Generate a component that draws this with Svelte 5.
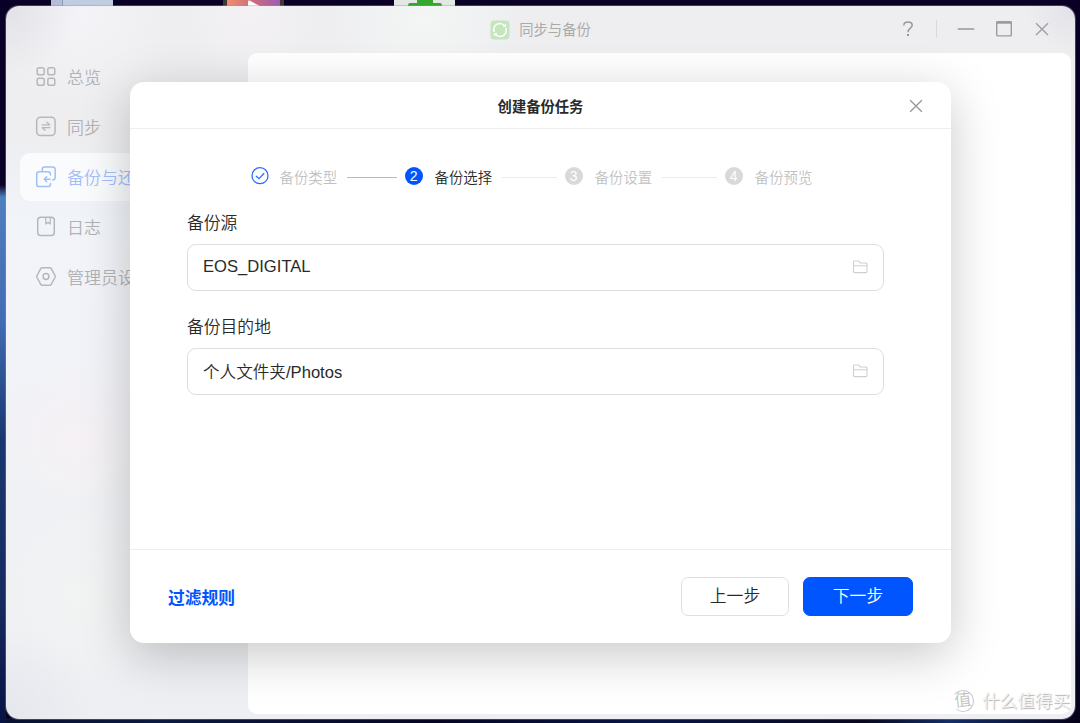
<script>
    let menu = [
        { id: "overview", label: "总览" },
        { id: "sync", label: "同步" },
        { id: "backup", label: "备份与还原" },
        { id: "log", label: "日志" },
        { id: "admin", label: "管理员设置" }
    ];

    let steps = ["备份类型", "备份选择", "备份设置", "备份预览"];

    let active = $state("backup");
    let current = $state(1);
    let open = $state(true);

    let fields = $state([
        { label: "备份源", value: "EOS_DIGITAL" },
        { label: "备份目的地", value: "个人文件夹/Photos" }
    ]);

    function next() {
        if (current < steps.length - 1) current++;
    }

    function prev() {
        if (current > 0) current--;
    }
</script>

<main class="desktop">
    <div class="shortcuts">
        <span class="shortcut doc"></span>
        <span class="shortcut video">
            <svg width="14" height="6" viewBox="0 0 14 6"><path d="M1 6V2Q1 0 3 .8L13 6Z" fill="#fff" /></svg>
        </span>
        <span class="shortcut download">
            <svg width="34" height="6" viewBox="0 0 34 6"><path d="M9 0H25V3H32Q34 3 34 6H0Q0 3 2 3H9Z" fill="#35a72c" /></svg>
        </span>
    </div>

    <div class="window">
        <header class="titlebar">
            <div class="title">
                <svg width="20" height="20" viewBox="0 0 20 20">
                    <rect x=".5" y=".5" width="19" height="19" rx="4" fill="#c4e5be" />
                    <path d="M4.3 12A6 6 0 0 1 14.6 6M15.7 8A6 6 0 0 1 5.4 14" fill="none" stroke="#fff" stroke-width="1.6" />
                    <path d="M12.5 6.8h3.6V3.4ZM7.5 13.2H3.9v3.4Z" fill="#fff" />
                </svg>
                <span>同步与备份</span>
            </div>
            <div class="controls">
                <svg class="help" width="12" height="18" viewBox="0 0 12 18" fill="none" stroke="#99999b" stroke-width="1.5">
                    <path d="M1.8 5.4Q1.8 2 6 2T10.2 5.3C10.2 8.2 6 8.2 6 12.2" />
                    <path d="M6 14v2" stroke-width="2" />
                </svg>
                <span class="divider"></span>
                <svg width="18" height="18" viewBox="0 0 18 18"><path d="M1.5 9h15" stroke="#adadaf" stroke-width="2" stroke-linecap="round" /></svg>
                <svg width="18" height="18" viewBox="0 0 18 18" fill="none" stroke="#9c9c9e">
                    <rect x="1.7" y="1.7" width="14.6" height="14.2" rx="1" stroke-width="1.4" />
                    <path d="M1.5 2.5h15" stroke-width="2.6" />
                </svg>
                <svg width="18" height="18" viewBox="0 0 18 18"><path d="M3 3.2 15 15M15 3.2 3 15" stroke="#a0a0a2" stroke-width="1.4" /></svg>
            </div>
        </header>

        <div class="body">
            <nav>
                {#each menu as item}
                    <button class="item" class:active={active === item.id} onclick={() => (active = item.id)}>
                        <svg width="22" height="22" viewBox="0 0 22 22" fill="none" stroke="currentColor" stroke-width="1.5" stroke-linecap="round" stroke-linejoin="round">
                            {#if item.id === "overview"}
                                <rect x="2.2" y="1.7" width="7" height="7" rx="1.8" />
                                <rect x="12.8" y="1.7" width="7" height="7" rx="1.8" />
                                <rect x="2.2" y="12.3" width="7" height="7" rx="1.8" />
                                <rect x="12.8" y="12.3" width="7" height="7" rx="1.8" />
                            {:else if item.id === "sync"}
                                <rect x="1.7" y="1.2" width="18.4" height="18.4" rx="3.8" />
                                <path d="M7.3 8.9h7.4L12 6.3M14.7 11.7H7.3L10 14.3" stroke-width="1.3" />
                            {:else if item.id === "backup"}
                                <path d="M7.2 5.2V3.8Q7.2 1.1 9.9 1.1H17.5Q20.2 1.1 20.2 3.8V11.2Q20.2 13.9 17.5 13.9" />
                                <path d="M15.4 9V8.2Q15.4 5.8 13 5.8H4.1Q1.7 5.8 1.7 8.2V18.2Q1.7 20.6 4.1 20.6H13Q15.4 20.6 15.4 18.2V17.6" />
                                <path d="M15 13.3H9.3M11.7 10.8 9.2 13.3 11.7 15.8" />
                            {:else if item.id === "log"}
                                <rect x="2.7" y="1.3" width="16.6" height="18.2" rx="3" />
                                <path d="M10.7 1.5V8L13 6.2 15.3 8V1.5" stroke-width="1.2" />
                            {:else}
                                <path d="M7.2 1.7H14.8Q15.7 1.7 16.1 2.4L20 9.5Q20.5 10.5 20 11.5L16.1 18.6Q15.7 19.3 14.8 19.3H7.2Q6.3 19.3 5.9 18.6L2 11.5Q1.5 10.5 2 9.5L5.9 2.4Q6.3 1.7 7.2 1.7Z" />
                                <circle cx="11" cy="10.5" r="2.9" />
                            {/if}
                        </svg>
                        <span>{item.label}</span>
                    </button>
                {/each}
            </nav>
            <section class="content"></section>
        </div>
    </div>

    {#if open}
        <div class="modal" role="dialog">
            <div class="modal-head">
                <h2>创建备份任务</h2>
                <button class="close" aria-label="关闭" onclick={() => (open = false)}>
                    <svg width="14" height="14" viewBox="0 0 14 14"><path d="M1.2 1.2 12.8 12.8M12.8 1.2 1.2 12.8" stroke="#999" stroke-width="1.4" /></svg>
                </button>
            </div>

            <div class="modal-body">
                <div class="steps">
                    {#each steps as step, i}
                        {#if i > 0}
                            <span class="line" class:passed={i <= current}></span>
                        {/if}
                        <div class="step" class:current={i === current} class:done={i < current}>
                            {#if i < current}
                                <svg width="18" height="18" viewBox="0 0 18 18" fill="none" stroke="#2c6cff" stroke-width="1.3">
                                    <circle cx="9" cy="8.7" r="8" />
                                    <path d="M5 8.9 8 11.7 13.2 6.3" />
                                </svg>
                            {:else}
                                <span class="number">{i + 1}</span>
                            {/if}
                            <span class="name">{step}</span>
                        </div>
                    {/each}
                </div>

                {#each fields as field}
                    <div class="field">
                        <div class="label">{field.label}</div>
                        <div class="input">
                            <span>{field.value}</span>
                            <svg width="16" height="14" viewBox="0 0 16 14" fill="none" stroke="#cfcfcf" stroke-width="1.1">
                                <path d="M1.5 11.6V2Q1.5 1 2.5 1H6.2Q6.8 1 7.2 1.6L8.2 3H14Q15 3 15 4V11.6Q15 12.6 14 12.6H2.5Q1.5 12.6 1.5 11.6ZM1.5 5.7H15" />
                            </svg>
                        </div>
                    </div>
                {/each}
            </div>

            <footer>
                <button class="filter">过滤规则</button>
                <button class="btn" onclick={prev}>上一步</button>
                <button class="btn primary" onclick={next}>下一步</button>
            </footer>
        </div>
    {/if}

    <div class="watermark">
        <span class="logo">值</span>
        <span>什么值得买</span>
    </div>
</main>

<style>
    :global(body) {
        margin: 0;
        overflow: hidden;
    }

    .desktop {
        position: relative;
        box-sizing: border-box;
        width: 1080px;
        height: 723px;
        padding: 6px 5px 4px 6px;
        overflow: hidden;
        background:
            linear-gradient(to bottom, #0a0025 0, #0a0025 185px, #4e7fbc 197px, #426cb4 320px, #18376f 440px, #172b60 600px, #061242 723px) 0 0 / 6px 723px no-repeat,
            linear-gradient(to right, #07102f, #0c1940 15%, #050522 40%, #081544 60%, #08071e 80%, #142e66 88%, #050019) 0 100% / 1080px 5px no-repeat,
            linear-gradient(#0a0025 0, #080026 160px, #020b38 270px, #0a245d 510px, #050723 650px, #050019);
        font-family: "Liberation Sans", "Noto Sans CJK SC", sans-serif;
        font-weight: 350;
        color: #2a2a2a;
    }

    button {
        padding: 0;
        border: none;
        background: none;
        font: inherit;
        color: inherit;
    }

    svg {
        flex: none;
        display: block;
    }

    .shortcuts {
        position: absolute;
        top: 0;
        left: 0;
        width: 100%;
        height: 6px;
    }

    .shortcut {
        position: absolute;
        top: 0;
        height: 6px;
        box-sizing: border-box;
        display: flex;
        justify-content: center;
    }

    .doc {
        left: 51px;
        width: 62px;
        background: linear-gradient(to right, #b3bdd3 11px, #8e9cb8 11px, #8e9cb8 12px, #c1cce0 12px);
    }

    .video {
        left: 223px;
        width: 61px;
        border: solid #3c3838;
        border-width: 0 4px;
        background: linear-gradient(to right, #ef8f6d, #c56a80 55%, #9e5db1);
    }

    .download {
        left: 394px;
        width: 61px;
        background: #e3e7e5;
    }

    .window {
        position: relative;
        height: 713px;
        box-sizing: border-box;
        display: flex;
        flex-direction: column;
        border-radius: 13px;
        overflow: hidden;
        box-shadow: 0 0 0 1px rgba(150, 145, 170, 0.4);
        background:
            radial-gradient(circle at 0 0, #e2e1e7 0, rgba(226, 225, 231, 0) 70px),
            radial-gradient(circle at 100% 0, #e2e1e8 0, rgba(226, 225, 232, 0) 50px),
            radial-gradient(circle at 0 100%, #e6e7ee 0, rgba(230, 231, 238, 0) 90px),
            radial-gradient(circle at 75px 10px, #f4f4f8 0, rgba(244, 244, 248, 0) 90px),
            radial-gradient(circle at 245px 8px, #f4f1f5 0, rgba(244, 241, 245, 0) 65px),
            radial-gradient(circle at 418px 12px, #f3f6f5 0, rgba(243, 246, 245, 0) 95px),
            radial-gradient(circle at 70px 435px, #f6f1f4 0, rgba(246, 241, 244, 0) 80px),
            radial-gradient(circle at 75px 590px, #f2f4f3 0, rgba(242, 244, 243, 0) 90px),
            linear-gradient(#eeeef0 0, #eeeef1 130px, #f1f4f9 220px, #f1f3f8 340px, #eff1f4 520px, #eeeff2 713px);
    }

    .titlebar {
        height: 47px;
        flex: none;
        display: grid;
        grid-template-columns: 1fr auto 1fr;
        align-items: center;
    }

    .title {
        grid-column: 2;
        display: flex;
        align-items: center;
        gap: 9px;
        font-size: 14.3px;
        font-weight: 400;
        color: #aaaaab;
    }

    .title span {
        padding-bottom: 2px;
    }

    .controls {
        display: flex;
        align-items: center;
        justify-content: flex-end;
        gap: 20px;
        padding: 0 24px 1px 0;
    }

    .help {
        margin-right: 2px;
    }

    .divider {
        width: 1px;
        height: 18px;
        background: #d9d9db;
    }

    .body {
        flex: 1;
        display: flex;
        padding: 0 4px 5px 0;
    }

    nav {
        width: 242px;
        box-sizing: border-box;
        padding: 0 14px;
        display: flex;
        flex-direction: column;
        gap: 2px;
    }

    .item {
        display: flex;
        align-items: center;
        gap: 10px;
        height: 48px;
        padding: 0 15px;
        border-radius: 10px;
        font-size: 17px;
        color: #b2b2b4;
    }

    .item svg {
        color: #b7b7ba;
    }

    .item span {
        padding-bottom: 2px;
    }

    .item.active,
    .item.active svg {
        color: #a3bffb;
    }

    .item.active {
        background: #fafbfd;
    }

    .content {
        flex: 1;
        border-radius: 9px;
        background: #fff;
    }

    .modal {
        position: absolute;
        left: 130px;
        top: 82px;
        width: 821px;
        height: 561px;
        display: flex;
        flex-direction: column;
        border-radius: 14px;
        background: #fff;
        box-shadow: 0 12px 50px rgba(0, 0, 0, 0.22);
    }

    .modal-head {
        height: 46px;
        flex: none;
        display: grid;
        grid-template-columns: 1fr auto 1fr;
        align-items: center;
        border-bottom: 1px solid #eee;
    }

    h2 {
        grid-column: 2;
        margin: 0;
        font-size: 14.3px;
        font-weight: 700;
    }

    .close {
        justify-self: end;
        margin-right: 28px;
        padding-top: 1px;
    }

    .modal-body {
        flex: 1;
        padding: 36px 67px 0 57px;
    }

    .steps {
        display: flex;
        align-items: center;
        height: 22px;
        margin-left: 64px;
    }

    .step {
        display: flex;
        align-items: center;
        gap: 12px;
        font-size: 14.4px;
        color: #c2c2c2;
    }

    .step.done {
        gap: 10.5px;
    }

    .number {
        width: 18px;
        height: 18px;
        border-radius: 50%;
        background: #d9d9d9;
        color: #fff;
        font-size: 14px;
        font-weight: 400;
        line-height: 18px;
        text-align: center;
    }

    .step.current {
        color: #2a2a2a;
    }

    .step.current .number {
        background: #0055ff;
    }

    .line {
        width: 55px;
        height: 1px;
        margin: 3px 8px 0 9.5px;
        background: #ebebeb;
    }

    .line.passed {
        width: 50px;
        background: #9bbcff;
    }

    .field {
        margin-top: 24px;
    }

    .label {
        height: 26px;
        line-height: 26px;
        font-size: 16.8px;
        margin-bottom: 7px;
    }

    .input {
        display: flex;
        align-items: center;
        justify-content: space-between;
        box-sizing: border-box;
        height: 47px;
        padding: 0 15px;
        border: 1px solid #dedede;
        border-radius: 9px;
        font-size: 16.6px;
    }

    .input span {
        padding-bottom: 2px;
    }

    .input svg {
        margin-bottom: 1px;
    }

    footer {
        height: 93px;
        flex: none;
        display: flex;
        align-items: center;
        gap: 14px;
        padding: 0 38px;
        border-top: 1px solid #eee;
    }

    .filter {
        margin-right: auto;
        font-size: 16.8px;
        font-weight: 700;
        color: #0055ff;
    }

    .btn {
        box-sizing: border-box;
        width: 108px;
        height: 39px;
        padding-bottom: 4px;
        border: 1px solid #dfdfdf;
        border-radius: 7px;
        font-size: 16.8px;
    }

    .btn.primary {
        width: 110px;
        border-color: #0055ff;
        background: #0055ff;
        color: #fff;
    }

    .watermark {
        position: absolute;
        left: 952px;
        top: 689px;
        display: flex;
        align-items: center;
        gap: 8px;
        font-size: 17.6px;
        line-height: 24px;
        white-space: nowrap;
        color: #f4f4f4;
        text-shadow: 1px 1px 1px #b2b2b2;
    }

    .logo {
        width: 20px;
        height: 20px;
        border: 1px solid #ccc;
        border-left-color: transparent;
        border-radius: 50%;
        font-size: 17px;
        line-height: 20px;
        text-align: center;
        color: #c2c2c2;
        text-shadow: none;
        transform: rotate(-6deg);
    }
</style>
